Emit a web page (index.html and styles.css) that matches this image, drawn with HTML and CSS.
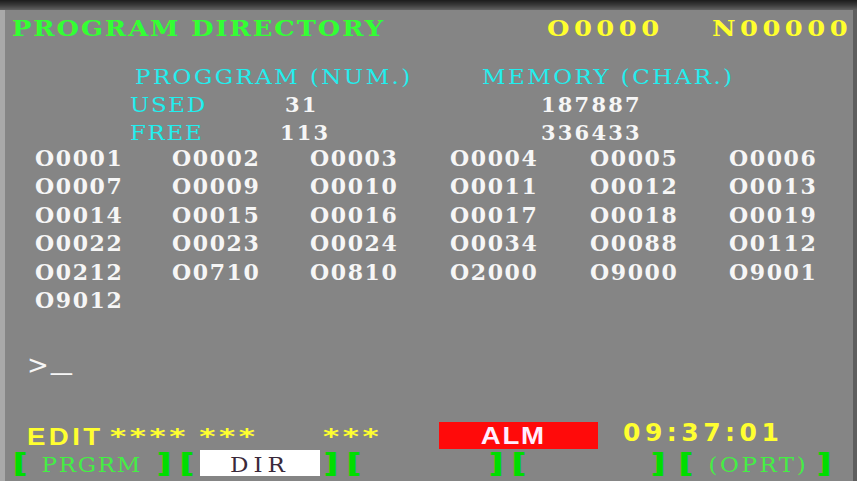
FILE: index.html
```html
<!DOCTYPE html>
<html lang="en">

<head>
  <meta charset="UTF-8">
  <meta name="viewport" content="width=device-width, initial-scale=1.0">
  <title>Program directory</title>
  <link rel="stylesheet" href="styles.css">
</head>

<body>
  <div class="screen">
    <div class="bezel"></div>

    <header class="title-row">
      <span class="title">PROGRAM DIRECTORY</span>
      <span class="prog-no">O0000</span>
      <span class="seq-no">N00000</span>
    </header>

    <section class="summary">
      <div class="sum-row sum-head">
        <span class="head head-num">PROGGRAM (NUM.)</span>
        <span class="head">MEMORY (CHAR.)</span>
      </div>
      <div class="sum-row">
        <span class="label">USED</span>
        <span class="value value-num value-used">31</span>
        <span class="value">187887</span>
      </div>
      <div class="sum-row">
        <span class="label">FREE</span>
        <span class="value value-num">113</span>
        <span class="value">336433</span>
      </div>
    </section>

    <section class="dir-list">
      <span>O0001</span><span>O0002</span><span>O0003</span><span>O0004</span><span>O0005</span><span>O0006</span>
      <span>O0007</span><span>O0009</span><span>O0010</span><span>O0011</span><span>O0012</span><span>O0013</span>
      <span>O0014</span><span>O0015</span><span>O0016</span><span>O0017</span><span>O0018</span><span>O0019</span>
      <span>O0022</span><span>O0023</span><span>O0024</span><span>O0034</span><span>O0088</span><span>O0112</span>
      <span>O0212</span><span>O0710</span><span>O0810</span><span>O2000</span><span>O9000</span><span>O9001</span>
      <span>O9012</span>
    </section>

    <div class="input-line">&gt;<span class="cursor">_</span></div>

    <div class="status-row">
      <span class="mode">EDIT</span>
      <span class="stars stars-a">**** ***</span>
      <span class="stars stars-b">***</span>
      <span class="alm"><span class="wide">ALM</span></span>
      <span class="clock">09:37:01</span>
    </div>

    <nav class="softkeys">
      <span class="br">[</span>
      <span class="key key-prgrm"><span class="wide">PRGRM</span></span>
      <span class="br">]</span>

      <span class="br br-dir-open">[</span>
      <span class="key key-dir"><span class="wide wide-dir">DIR</span></span>
      <span class="br br-dir-close">]</span>

      <span class="br br-open">[</span>
      <span class="key key-blank"></span>
      <span class="br">]</span>

      <span class="br br-open-b">[</span>
      <span class="key key-blank-b"></span>
      <span class="br">]</span>

      <span class="br br-open-c">[</span>
      <span class="key key-oprt"><span class="wide wide-oprt">(OPRT)</span></span>
      <span class="br">]</span>
    </nav>
  </div>
</body>

</html>
```

FILE: styles.css
```css
* {
  margin: 0;
  padding: 0;
  box-sizing: border-box;
}

body {
  background: #858585;
  overflow: hidden;
}

.screen {
  width: 857px;
  height: 481px;
  display: flex;
  flex-direction: column;
  background: #858585;
  border-left: 5px solid #a9a9a9;
  border-right: 4px solid #5e5e5e;
  font-family: "DejaVu Serif", "Liberation Serif", serif;
  font-weight: bold;
  color: #f6f6f6;
}

.bezel {
  height: 10px;
  margin-left: -5px;
  margin-right: -4px;
  background: linear-gradient(to bottom, #1c1c1c, #3a3a3a 50%, #626262);
}

/* header line */
.title-row {
  display: flex;
  align-items: baseline;
  height: 36px;
  line-height: 36px;
  padding-left: 7px;
  font-size: 23px;
}

.title {
  color: #33ff33;
  width: 535px;
  letter-spacing: 1.7px;
  transform: scaleX(1.12);
  transform-origin: left;
}

.prog-no,
.seq-no {
  color: #ffff2e;
  letter-spacing: 4px;
  transform: scaleX(1.12);
  transform-origin: left;
}

.prog-no {
  width: 165px;
}

/* used / free counts */
.summary {
  display: flex;
  flex-direction: column;
  padding-top: 17px;
}

.sum-row {
  display: flex;
  height: 28px;
  line-height: 28px;
  padding-left: 125px;
}

.sum-head {
  padding-left: 130px;
}

.head,
.label {
  color: #22eeee;
  font-weight: normal;
  font-size: 20px;
  transform: scaleX(1.15);
  transform-origin: left;
}

.head {
  letter-spacing: 2.1px;
}

.head-num {
  width: 347px;
}

.label {
  width: 150px;
  letter-spacing: 1.4px;
}

.value {
  font-size: 21px;
  letter-spacing: 2.2px;
}

.value-num {
  width: 261px;
}

.value-used {
  padding-left: 5px;
}

/* program numbers */
.dir-list {
  display: grid;
  grid-template-columns: 137px 138px 140px 140px 139px 120px;
  grid-auto-rows: 28.4px;
  padding-left: 30px;
  margin-top: -3px;
  height: 190px;
  font-size: 22px;
  line-height: 28px;
  letter-spacing: 1.6px;
}

.input-line {
  padding: 11px 0 0 22px;
  line-height: 30px;
  font-family: "DejaVu Sans", sans-serif;
  font-weight: normal;
  font-size: 26px;
}

.cursor {
  display: inline-block;
  margin-left: 2px;
  vertical-align: 5px;
  transform: scaleX(1.6);
  transform-origin: left;
}

/* mode and alarm line */
.status-row {
  display: flex;
  align-items: flex-end;
  height: 30px;
  margin-top: auto;
  padding-left: 22px;
  color: #ffff30;
  line-height: 24px;
}

.mode {
  width: 83px;
  font-family: "Liberation Sans", Arial, sans-serif;
  font-size: 24px;
  letter-spacing: 3px;
  transform: scaleX(1.15);
  transform-origin: left;
}

.stars {
  font-family: "DejaVu Sans", sans-serif;
  font-size: 22px;
  letter-spacing: 2.6px;
  word-spacing: -3px;
  transform: scaleX(1.4);
  transform-origin: left;
}

.stars-a {
  width: 213px;
}

.stars-b {
  width: 116px;
}

.alm {
  width: 159px;
  height: 27px;
  padding-right: 10px;
  background: #ff0a0a;
  color: #ffeeff;
  text-align: center;
  font-family: "Liberation Sans", Arial, sans-serif;
  font-size: 24px;
  line-height: 27px;
}

.clock {
  margin-left: 25px;
  padding-bottom: 4px;
  font-family: "DejaVu Sans", sans-serif;
  font-size: 25px;
  letter-spacing: 4.5px;
}

/* soft keys */
.softkeys {
  display: flex;
  align-items: flex-start;
  height: 32px;
  padding: 1px 0 0 9px;
}

.br {
  width: 12px;
  font-family: "DejaVu Sans", sans-serif;
  font-size: 27px;
  line-height: 26px;
  color: #00dd00;
  text-align: center;
  text-shadow: 1px 0 0 #00dd00, -1px 0 0 #00dd00;
}

.br-dir-open {
  width: 18px;
  margin-left: 8px;
}

.br-dir-close {
  width: 14px;
  margin-left: 4px;
}

.br-open {
  width: 16px;
  margin-left: 8px;
}

.br-open-b {
  width: 14px;
  margin-left: 10px;
}

.br-open-c {
  width: 14px;
  margin-left: 15px;
}

.key {
  height: 26px;
  line-height: 30px;
  font-size: 20px;
  font-weight: normal;
  color: #44ee44;
  text-align: center;
}

.wide {
  display: inline-block;
  letter-spacing: 1.5px;
  transform: scaleX(1.15);
}

.wide-dir {
  letter-spacing: 4.3px;
}

.wide-oprt {
  letter-spacing: 2.2px;
}

.key-prgrm {
  width: 132px;
}

.key-dir {
  width: 120px;
  margin-left: 4px;
  background: #ffffff;
  color: #3a2a3a;
}

.key-blank {
  width: 128px;
}

.key-blank-b {
  width: 126px;
}

.key-oprt {
  width: 125px;
  padding-left: 6px;
}
```
